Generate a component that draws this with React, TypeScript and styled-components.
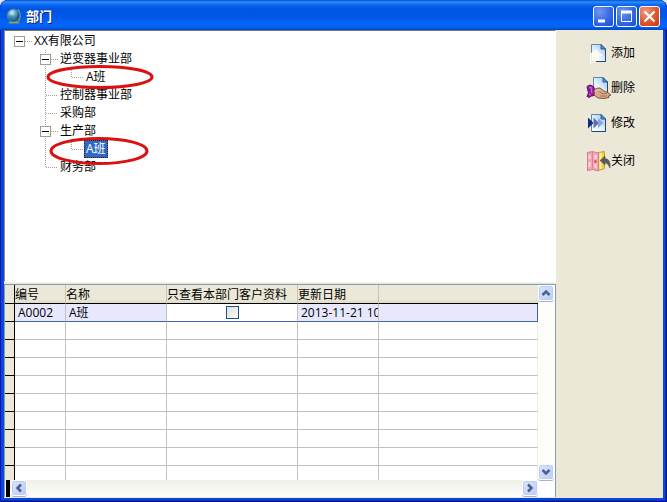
import React from 'react';
import styled, { createGlobalStyle, css } from 'styled-components';

const GlobalStyle = createGlobalStyle`
  * { box-sizing: border-box; }
  html, body, #root { height: 100%; }
  body {
    margin: 0;
    background: #dfe6f0;
    color: #000;
    font: 12px/18px "Open Sans", "Noto Sans CJK SC", sans-serif;
    overflow: hidden;
  }
  button { font: inherit; color: inherit; border: 0; padding: 0; background: none; }
`;

const Window = styled.main`
  display: flex;
  flex-direction: column;
  height: 100vh;
  overflow: hidden;
  padding: 0 4px 4px;
  border-radius: 8px 8px 0 0;
  background: #0a45dc;
  box-shadow: inset 1px 0 #0019a8, inset -1px 0 #00138c, inset 0 -1px #00138c, inset -2px -2px #0530c0;
`;

const TitleBar = styled.header`
  display: flex;
  align-items: center;
  flex: none;
  height: 30px;
  margin: 0 -4px;
  padding: 2px 7px 0 6px;
  gap: 4px;
  border-radius: 8px 8px 0 0;
  background: linear-gradient(#0a50cc 0, #2b8cff 2px, #0a66ee 5px, #0054e3 9px, #0057e8 17px, #0466fb 24px, #0461f2 27px, #0246c4 30px);
`;

const Title = styled.h1`
  flex: 1;
  margin: 0;
  font-size: 13px;
  line-height: 18px;
  font-weight: 700;
  color: #fff;
  text-shadow: 1px 1px #0b2b80;
`;

const CaptionButtons = styled.div`
  display: flex;
  gap: 2px;
`;

const CaptionButton = styled.button<{ $danger?: boolean }>`
  width: 21px;
  height: 21px;
  border: 1px solid #fff;
  border-radius: 3px;
  background: ${p => p.$danger
    ? 'radial-gradient(circle at 30% 25%, #ee9a80, #e2552f 55%, #c43a14)'
    : 'radial-gradient(circle at 30% 25%, #6f97f0, #3468e4 55%, #1c4fd0)'};
  svg { display: block; }
`;

const Client = styled.div`
  display: flex;
  flex: 1;
  min-height: 0;
  background: #ebe8d7;
`;

const Content = styled.div`
  display: flex;
  flex-direction: column;
  flex: 1;
  min-width: 0;
  padding: 0 0 1px;
  gap: 2px;
`;

const TreePane = styled.nav`
  flex: 1;
  min-height: 0;
  overflow: hidden;
  background: #fff;
  border: solid #fff;
  border-width: 1px;
  border-top-color: #77756c;
  border-left-color: #8c8b84;
  box-shadow: 0 1px #f4f2e6;
`;

const TreeList = styled.ul`
  list-style: none;
  margin: 0;
  padding: 1px 0 0 3px;
`;

const TreeRow = styled.li`
  display: flex;
  position: relative;
  height: 18px;
`;

const Toggle = styled.button`
  width: 24px;
  height: 18px;
  svg { display: block; }
`;

const NodeLabel = styled.span<{ $selected?: boolean }>`
  padding: 0 2px;
  white-space: nowrap;
  ${p => p.$selected && css`
    color: #fff;
    background: #316ac5;
    outline: 1px dotted #20201c;
    outline-offset: -1px;
  `}
`;

const Mark = styled.svg`
  position: absolute;
  left: 38px;
  top: -3px;
  z-index: 1;
  pointer-events: none;
`;

const GridPane = styled.section`
  display: grid;
  grid-template-columns: minmax(0, 1fr) 17px;
  grid-template-rows: 195px 17px;
  flex: none;
  border: solid #7f9db9;
  border-width: 1px 1px 0 1px;
  background: #fff;
`;

const TableArea = styled.div`
  overflow: hidden;
`;

const Table = styled.table`
  width: 100%;
  table-layout: fixed;
  border-collapse: separate;
  border-spacing: 0;
`;

const GutterCol = styled.col` width: 10px; `;
const CodeCol = styled.col` width: 51px; `;
const NameCol = styled.col` width: 101px; `;
const FlagCol = styled.col` width: 131px; `;
const DateCol = styled.col` width: 81px; `;

const HeadCell = styled.th`
  height: 19px;
  padding: 0;
  font-weight: 400;
  line-height: 17px;
  text-align: left;
  white-space: nowrap;
  background: linear-gradient(#ebe8d7 14px, #dedbc8);
  border-bottom: 1px solid #000;
  border-right: 1px solid #c8c5b3;
  &:last-child { border-right: 0; }
`;

const Gutter = styled.th`
  height: 18px;
  padding: 0;
  background: #ebe8d7;
  border-right: 1px solid #000;
  border-bottom: 1px solid #000;
`;

const Cell = styled.td<{ $active?: boolean; $tint?: boolean }>`
  height: 18px;
  padding: 0 3px;
  line-height: 17px;
  white-space: nowrap;
  overflow: hidden;
  text-align: left;
  border-right: 1px solid #c0c0c0;
  border-bottom: 1px solid ${p => (p.$active ? '#3f66a5' : '#c0c0c0')};
  background: ${p => (p.$tint ? '#e8e8fd' : '#fff')};
  &:last-child { border-right-color: ${p => (p.$active ? '#3f66a5' : '#f0f0f0')}; }
`;

const CheckCell = styled(Cell)`
  text-align: center;
`;

const CheckBox = styled.input`
  appearance: none;
  display: block;
  width: 13px;
  height: 13px;
  margin: 0 auto;
  border: 1px solid #1c5180;
  background: linear-gradient(135deg, #dcdcd7, #fff);
`;

const VScroll = styled.div`
  display: flex;
  flex-direction: column;
  justify-content: space-between;
  padding: 0 1px 0 0;
  background: #fdfdfa;
`;

const HScroll = styled.div`
  display: flex;
  justify-content: space-between;
  padding-left: 1px;
  background: linear-gradient(#f1f0e9, #fdfdfb);
`;

const SplitHandle = styled.span`
  width: 4px;
  background: #000;
`;

const ScrollStart = styled.div`
  display: flex;
  gap: 1px;
`;

const ScrollButton = styled.button`
  width: 16px;
  height: 16px;
  border: 1px solid #fff;
  border-radius: 3px;
  background: linear-gradient(135deg, #dbe6fe, #b8ccf9);
  box-shadow: inset 0 0 0 1px #bccdf5, 0 1px #9fb5d6;
  svg { display: block; }
`;

const Actions = styled.aside`
  display: flex;
  flex-direction: column;
  flex: none;
  width: 107px;
  padding: 11px 0 0 30px;
  gap: 11px;
`;

const Action = styled.button`
  display: flex;
  align-items: center;
  gap: 1px;
  height: 24px;
  white-space: nowrap;
  svg { overflow: visible; }
  &:last-child { margin-top: 3px; }
`;

function Branch({ last }: { last?: boolean }) {
  return (
    <svg width="24" height="18" aria-hidden="true">
      <g stroke="#a5a29a" strokeDasharray="1 1" fill="none">
        <path d={last ? 'M11.5 0V10' : 'M11.5 0V18'} />
        <path d="M12 9.5H24" />
      </g>
    </svg>
  );
}

function Guide({ line }: { line?: boolean }) {
  return (
    <svg width="26" height="18" aria-hidden="true">
      {line && <path d="M11.5 0V18" stroke="#a5a29a" strokeDasharray="1 1" />}
    </svg>
  );
}

function Expander({ name, root }: { name: string; root?: boolean }) {
  return (
    <Toggle type="button" aria-expanded="true" aria-label={name}>
      <svg width="24" height="18">
        <path d={root ? 'M17 9.5H24' : 'M11.5 0V18M17 9.5H24'} stroke="#a5a29a" strokeDasharray="1 1" />
        <rect x="6.5" y="4.5" width="10" height="10" fill="#fff" stroke="#a09d90" />
        <path d="M8 9.5H15" stroke="#000" />
      </svg>
    </Toggle>
  );
}

type Node = {
  label: string;
  depth: number;
  open?: boolean;
  last?: boolean;
  selected?: boolean;
  mark?: 'wide' | 'tall';
};

const nodes: Node[] = [
  { label: 'XX有限公司', depth: 0, open: true },
  { label: '逆变器事业部', depth: 1, open: true },
  { label: 'A班', depth: 2, last: true, mark: 'wide' },
  { label: '控制器事业部', depth: 1 },
  { label: '采购部', depth: 1 },
  { label: '生产部', depth: 1, open: true },
  { label: 'A班', depth: 2, last: true, selected: true, mark: 'tall' },
  { label: '财务部', depth: 1, last: true },
];

function TreeNode({ node }: { node: Node }) {
  return (
    <TreeRow>
      {node.depth > 0 && <Guide />}
      {node.depth > 1 && <Guide line />}
      {node.open ? <Expander name={node.label} root={node.depth === 0} /> : <Branch last={node.last} />}
      <NodeLabel $selected={node.selected}>{node.label}</NodeLabel>
      {node.mark === 'wide' && (
        <Mark width="108" height="28" aria-hidden="true">
          <ellipse cx="54" cy="12" rx="52" ry="10.5" fill="none" stroke="#dc1010" strokeWidth="3" />
        </Mark>
      )}
      {node.mark === 'tall' && (
        <Mark width="108" height="30" aria-hidden="true">
          <ellipse cx="53" cy="14" rx="48" ry="12.5" fill="none" stroke="#dc1010" strokeWidth="3" />
        </Mark>
      )}
    </TreeRow>
  );
}

const arrows = {
  up: 'M3.5 9L7 5.5L10.5 9',
  down: 'M3.5 5L7 8.5L10.5 5',
  left: 'M9 3.5L5.5 7L9 10.5',
  right: 'M5 3.5L8.5 7L5 10.5',
};

function Arrow({ to }: { to: keyof typeof arrows }) {
  return (
    <ScrollButton type="button" aria-label={`Scroll ${to}`}>
      <svg width="14" height="14">
        <path d={arrows[to]} fill="none" stroke="#4d6185" strokeWidth="2.5" />
      </svg>
    </ScrollButton>
  );
}

function Globe() {
  return (
    <svg width="16" height="16" viewBox="0 0 16 16" aria-hidden="true">
      <defs>
        <radialGradient id="globe" cx=".38" cy=".3" r=".7">
          <stop offset="0" stopColor="#d8f2f7" />
          <stop offset=".4" stopColor="#62aeca" />
          <stop offset=".75" stopColor="#216a9a" />
          <stop offset="1" stopColor="#123f67" />
        </radialGradient>
      </defs>
      <path d="M2 14.5Q8 11 14 14.5L12 15.5H4Z" fill="#8b9c6c" />
      <path d="M12 1.5Q16 7 12.5 13" fill="none" stroke="#829a78" strokeWidth="1.5" />
      <circle cx="7.5" cy="7.3" r="6.3" fill="url(#globe)" stroke="#4b7f9c" />
      <path d="M3 8Q6 6 8 9T12 9Q10 13 6 12Z" fill="#338b9b" opacity=".6" />
    </svg>
  );
}

function PageShape() {
  return (
    <>
      <defs>
        <linearGradient id="page" x1="0" y1="1" x2="1" y2="0">
          <stop offset="0" stopColor="#ffffff" />
          <stop offset=".45" stopColor="#e4f1fc" />
          <stop offset="1" stopColor="#8cc3f0" />
        </linearGradient>
      </defs>
      <path d="M5.5 3.5H15L19.5 8V20.5H5.5Z" fill="url(#page)" stroke="#6386ad" />
      <path d="M15 3.5V8H19.5Z" fill="#4b94d6" stroke="#285b91" />
      <path d="M19.5 8V20.5H6" fill="none" stroke="#1f4677" />
    </>
  );
}

function AddIcon() {
  return (
    <svg width="24" height="24" aria-hidden="true">
      <PageShape />
      <path d="M4 12L8 11L11 8L13 12L17 14L13 16L11 19L9 22H4Z" fill="#fffdf0" opacity=".85" />
    </svg>
  );
}

function DeleteIcon() {
  return (
    <svg width="24" height="24" aria-hidden="true">
      <g transform="translate(2 -2)"><PageShape /></g>
      <path d="M1 10.5L4 9L7.5 10.5L9 14L8.5 19.5L5 20L3.5 21.5L1 20.5L2.5 17Z" fill="#8a1a98" stroke="#5a0d68" />
      <path d="M3 11.5L5.5 11.5L5.5 17M3 18.5H5" fill="none" stroke="#cf5bdc" strokeWidth="1.5" />
      <path d="M8 14Q11 11.5 14 12L18 15Q22 16 25 19L22.5 20L23 21.5L18 22.5L12 22L8.5 19.5Z" fill="#d7ab88" stroke="#80553c" />
      <path d="M12 14.5L16 17.5H21M14 20H21" fill="none" stroke="#a5745a" />
      <path d="M9.5 15L12 13.5L14 15" fill="none" stroke="#f3d4b8" />
    </svg>
  );
}

function EditIcon() {
  return (
    <svg width="24" height="24" aria-hidden="true">
      <PageShape />
      <path d="M2 6.5L7.5 12L2 17.5Z" fill="#142a84" />
      <path d="M7.5 6.5L13 12L7.5 17.5Z" fill="#5a70b6" />
      <path d="M12 7L17.5 12L12 17Z" fill="#8fa2d6" />
    </svg>
  );
}

function CloseIcon() {
  return (
    <svg width="24" height="24" aria-hidden="true">
      <path d="M12.5 3.5L18.5 2.5V19.5L12.5 21.5Z" fill="#f3d33c" stroke="#c1a136" />
      <path d="M14.5 4V20" stroke="#fff3a0" strokeWidth="2" />
      <path d="M1.5 3.5L6.5 2.5L12.5 4V22L6.5 20.5L1.5 21.5Z" fill="#f5a5b5" stroke="#cf8090" />
      <path d="M6.5 3V20.5" stroke="#d98393" />
      <path d="M3.5 6V10M3.5 13V18M9.5 6V10M9.5 15V19" stroke="#fcdbe0" strokeWidth="2" />
      <circle cx="9.5" cy="12.5" r="1.2" fill="#d2452f" />
      <path d="M14 11.5L19 7V9.5Q25 10 24 19Q22 14 19 13.5V16Z" fill="#5d5b56" stroke="#45443f" strokeWidth=".5" />
    </svg>
  );
}

export default function App() {
  return (
    <>
      <GlobalStyle />
      <Window>
        <TitleBar>
          <Globe />
          <Title>部门</Title>
          <CaptionButtons>
            <CaptionButton type="button" aria-label="最小化">
              <svg width="19" height="19"><path d="M4 14H11" stroke="#fff" strokeWidth="3" /></svg>
            </CaptionButton>
            <CaptionButton type="button" aria-label="最大化">
              <svg width="19" height="19"><path d="M4.5 5V14.5H14.5V5M4 5.5H15" fill="none" stroke="#fff" /><path d="M4 5H15" stroke="#fff" strokeWidth="3" /></svg>
            </CaptionButton>
            <CaptionButton type="button" aria-label="关闭窗口" $danger>
              <svg width="19" height="19"><path d="M4.5 4.5L14.5 14.5M14.5 4.5L4.5 14.5" stroke="#fff" strokeWidth="2.2" /></svg>
            </CaptionButton>
          </CaptionButtons>
        </TitleBar>
        <Client>
          <Content>
            <TreePane>
              <TreeList>
                {nodes.map((node, i) => <TreeNode key={i} node={node} />)}
              </TreeList>
            </TreePane>
            <GridPane>
              <TableArea>
                <Table>
                  <colgroup>
                    <GutterCol /><CodeCol /><NameCol /><FlagCol /><DateCol /><col />
                  </colgroup>
                  <thead>
                    <tr>
                      <Gutter />
                      <HeadCell>编号</HeadCell>
                      <HeadCell>名称</HeadCell>
                      <HeadCell>只查看本部门客户资料</HeadCell>
                      <HeadCell>更新日期</HeadCell>
                      <HeadCell />
                    </tr>
                  </thead>
                  <tbody>
                    <tr>
                      <Gutter scope="row" />
                      <Cell $active $tint>A0002</Cell>
                      <Cell $active $tint>A班</Cell>
                      <CheckCell $active><CheckBox type="checkbox" aria-label="只查看本部门客户资料" /></CheckCell>
                      <Cell $active $tint>2013-11-21 10</Cell>
                      <Cell $active $tint />
                    </tr>
                    {Array.from({ length: 9 }, (_, i) => (
                      <tr key={i}>
                        <Gutter />
                        <Cell /><Cell /><Cell /><Cell /><Cell />
                      </tr>
                    ))}
                  </tbody>
                </Table>
              </TableArea>
              <VScroll>
                <Arrow to="up" />
                <Arrow to="down" />
              </VScroll>
              <HScroll>
                <ScrollStart>
                  <SplitHandle />
                  <Arrow to="left" />
                </ScrollStart>
                <Arrow to="right" />
              </HScroll>
            </GridPane>
          </Content>
          <Actions>
            <Action type="button"><AddIcon />添加</Action>
            <Action type="button"><DeleteIcon />删除</Action>
            <Action type="button"><EditIcon />修改</Action>
            <Action type="button"><CloseIcon />关闭</Action>
          </Actions>
        </Client>
      </Window>
    </>
  );
}
